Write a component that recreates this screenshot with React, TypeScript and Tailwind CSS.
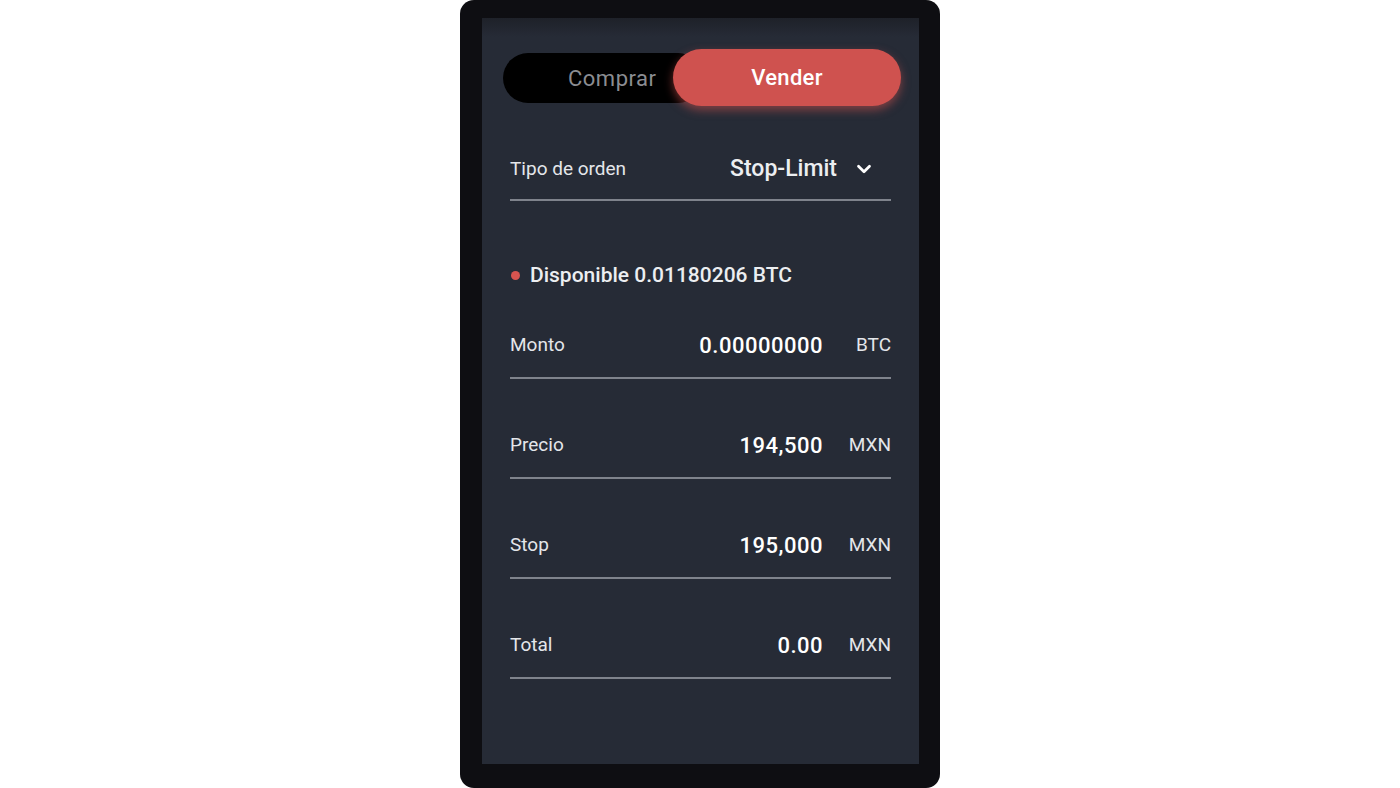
import { ChevronDown } from "lucide-react";

const rows = [
  { label: "Monto", value: "0.00000000", unit: "BTC" },
  { label: "Precio", value: "194,500", unit: "MXN" },
  { label: "Stop", value: "195,000", unit: "MXN" },
  { label: "Total", value: "0.00", unit: "MXN" },
];

export default function App() {
  return (
    <div
      className="flex h-[788px] w-[1400px] justify-center bg-white"
      style={{ fontFamily: "Roboto, 'Noto Sans', sans-serif" }}
    >
      <div className="flex h-[788px] w-[480px] flex-col rounded-[14px] bg-[#0e0e12] pb-[24px] pl-[22px] pr-[21px] pt-[18px]">
        <div className="flex flex-1 flex-col bg-[#262b36] bg-gradient-to-b from-[#1e2129] from-0% to-[#262b36] to-[2.5%] px-[28px] pt-[31px]">
          {/* buy / sell toggle */}
          <div className="relative flex h-[57px] items-center">
            <div className="absolute left-[-7px] top-[4px] flex h-[50px] w-[200px] items-center rounded-full bg-black pl-[65px]">
              <span className="text-[22px] tracking-[0.5px] text-[#8b8d92]">Comprar</span>
            </div>
            <div className="absolute left-[163px] top-0 flex h-[57px] w-[228px] items-center justify-center rounded-full bg-[#cf524f] shadow-[0_4px_10px_rgba(207,82,79,0.55)]">
              <span className="text-[22px] font-medium tracking-[0.3px] text-white">Vender</span>
            </div>
          </div>

          {/* order type */}
          <div className="mt-[33px] flex h-[62px] items-center justify-between border-b-2 border-[#7f838c]">
            <span className="text-[19px] text-[#e4e6ea]">Tipo de orden</span>
            <div className="mr-[16px] flex items-center gap-[16px]">
              <span className="text-[23px] font-medium text-[#eceef1]">Stop-Limit</span>
              <ChevronDown className="h-[22px] w-[22px] text-white" strokeWidth={3} />
            </div>
          </div>

          {/* available */}
          <div className="mt-[59px] flex items-center gap-[10px] pl-[1px]">
            <span className="h-[9px] w-[9px] rounded-full bg-[#d65450]" />
            <span className="text-[21px] font-medium text-[#eceef1]">Disponible 0.01180206 BTC</span>
          </div>

          {/* fields */}
          <div className="mt-[34px] flex flex-col gap-[47px]">
            {rows.map((row) => (
              <div
                key={row.label}
                className="flex h-[53px] items-center border-b-2 border-[#7f838c] pb-[12px]"
              >
                <span className="flex-1 text-[19px] text-[#e4e6ea]">{row.label}</span>
                <span className="text-[22px] font-medium tracking-[0.5px] text-white">{row.value}</span>
                <span className="w-[68px] text-right text-[19px] text-[#e4e6ea]">{row.unit}</span>
              </div>
            ))}
          </div>
        </div>
      </div>
    </div>
  );
}
